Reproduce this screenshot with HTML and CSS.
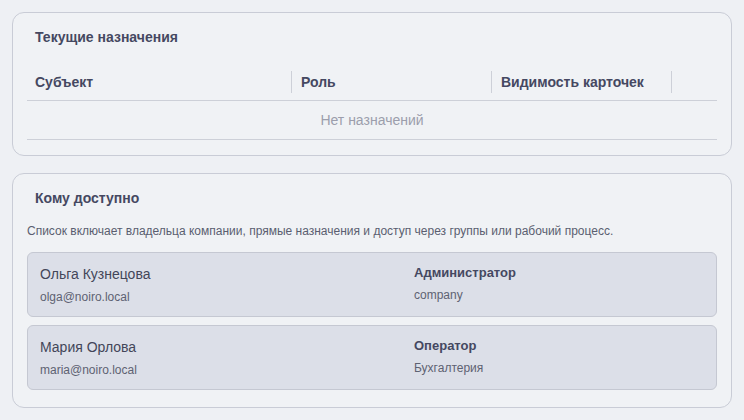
FILE: index.html
```html
<!DOCTYPE html>
<html lang="ru">

<head>
    <meta charset="UTF-8">
    <meta name="viewport" content="width=device-width, initial-scale=1.0">
    <title>Доступ</title>
    <link rel="stylesheet" href="styles.css">
</head>

<body>
    <div class="page">
        <section class="card">
            <h2 class="card-title">Текущие назначения</h2>
            <table class="assign-table">
                <thead>
                    <tr>
                        <th class="col-subject"><span>Субъект</span></th>
                        <th class="col-role"><span>Роль</span></th>
                        <th class="col-vis"><span>Видимость карточек</span></th>
                        <th class="col-actions"></th>
                    </tr>
                </thead>
                <tbody>
                    <tr>
                        <td class="empty" colspan="4">Нет назначений</td>
                    </tr>
                </tbody>
            </table>
        </section>

        <section class="card card-access">
            <h2 class="card-title">Кому доступно</h2>
            <p class="card-note">Список включает владельца компании, прямые назначения и доступ через группы или рабочий процесс.</p>
            <div class="access-list">
                <div class="access-item">
                    <div class="person">
                        <div class="person-name">Ольга Кузнецова</div>
                        <div class="person-email">olga@noiro.local</div>
                    </div>
                    <div class="grant">
                        <div class="grant-role">Администратор</div>
                        <div class="grant-source">company</div>
                    </div>
                </div>
                <div class="access-item">
                    <div class="person">
                        <div class="person-name">Мария Орлова</div>
                        <div class="person-email">maria@noiro.local</div>
                    </div>
                    <div class="grant">
                        <div class="grant-role">Оператор</div>
                        <div class="grant-source">Бухгалтерия</div>
                    </div>
                </div>
            </div>
        </section>
    </div>
</body>

</html>
```

FILE: styles.css
```css
body {
    font-family: "Liberation Sans", Arial, sans-serif;
    margin: 0;
    padding: 0;
    background-color: #eef0f4;
    color: #44475c;
}

.page {
    display: flex;
    flex-direction: column;
    gap: 17px;
    padding: 12px;
}

.card {
    background-color: #f0f2f5;
    border: 1px solid #c9ccd6;
    border-radius: 12px;
    padding: 14px 14px 15px;
}

.card-access {
    padding-bottom: 17px;
}

.card-title {
    margin: 0 8px;
    font-size: 14px;
    line-height: 20px;
    font-weight: bold;
    color: #454861;
}

/* table */
.assign-table {
    width: 100%;
    margin-top: 17px;
    border-collapse: collapse;
    table-layout: fixed;
}

.assign-table th {
    height: 36px;
    padding: 0;
    text-align: left;
    font-size: 14px;
    font-weight: bold;
    color: #454861;
    border-bottom: 1px solid #cdd0d8;
}

.assign-table th span {
    display: block;
    padding: 0 8px;
    line-height: 22px;
    border-right: 1px solid #cdd0d8;
}

.assign-table .col-role span,
.assign-table .col-vis span {
    padding-left: 9px;
}

.assign-table .col-actions {
    width: 45px;
}

.col-subject {
    width: 265px;
}

.col-role {
    width: 200px;
}

.col-vis {
    width: 180px;
}

.empty {
    height: 38px;
    padding: 0;
    text-align: center;
    font-size: 14px;
    color: #9c9eac;
    border-bottom: 1px solid #cdd0d8;
}

/* access list */
.card-note {
    margin: 14px 0 0;
    font-size: 12px;
    line-height: 18px;
    color: #5a5e70;
}

.access-list {
    display: flex;
    flex-direction: column;
    gap: 8px;
    margin-top: 12px;
}

.access-item {
    display: grid;
    grid-template-columns: 374px 1fr;
    padding: 11px 12px;
    background-color: #dcdfe8;
    border: 1px solid #c5c8d2;
    border-radius: 6px;
}

.person-name {
    font-size: 14px;
    line-height: 20px;
    color: #434659;
}

.person-email {
    margin-top: 5px;
    font-size: 12px;
    line-height: 16px;
    color: #5e6272;
}

.grant-role {
    font-size: 13px;
    line-height: 18px;
    font-weight: bold;
    color: #454861;
}

.grant-source {
    margin-top: 5px;
    font-size: 12px;
    line-height: 16px;
    color: #5e6272;
}
```
